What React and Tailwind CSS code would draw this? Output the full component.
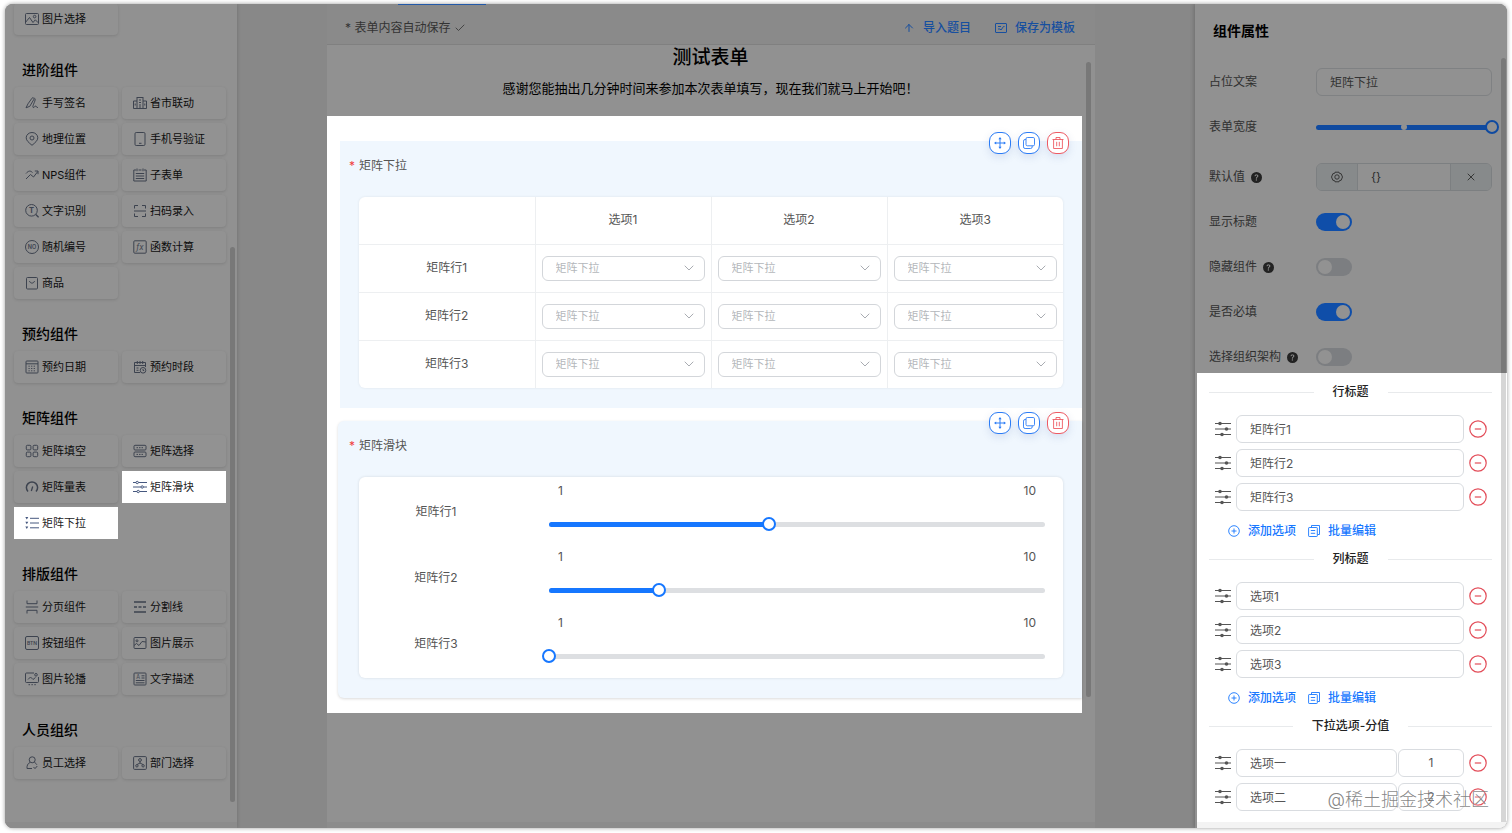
import React, { useState } from "react";
import { ArrowUp, Check, ChevronDown, X } from "lucide-react";
import { BsQuestionCircleFill } from "react-icons/bs";

// ---- Icons of the component palette, all on a 14x14 grid ----
const GLYPHS = {
  image: (
    <>
      <rect x="0.5" y="1.5" width="13" height="11" rx="1" />
      <circle cx="9.6" cy="4.6" r="1.3" />
      <path d="M0.8 10 4.5 5.5 8 10.5 10.3 7.8 13.3 10.8" />
    </>
  ),
  sign: <path d="M1 11.8 3 7.800 7 2.200c.8-1.100 2.600-.1 1.900 1.100L4.800 10.300 1 11.800M9.500 2.200c2.600.6-3 8.300-1.300 9.300 1.100.6 1.600-1.700 2.700-1.500.8.2.2 1.800 2 1.500" />,
  city: (
    <>
      <rect x="4" y="1.5" width="6" height="11" />
      <path d="M4 5H0.5v7.500h13V5H10M6 4h2M6 6.500h2M6 9h2M7 10v2.500M2.200 7.500v2M11.800 7.500v2" />
    </>
  ),
  pin: (
    <>
      <path d="M7 13.300C4 10.800 1.200 8.600 1.200 5.800a5.800 5.300 0 0 1 11.600 0C12.800 8.600 10 10.800 7 13.300z" />
      <circle cx="7" cy="6" r="2" />
    </>
  ),
  phone: (
    <>
      <rect x="2" y="0.5" width="10" height="13" rx="1.2" />
      <path d="M6 11.300h2.500" />
    </>
  ),
  trend: <path d="M1 5.500C3.500 2.500 5.500 2.500 7.500 4.500M1 11 5.500 6.500 8.500 9 12.800 3.500M9.800 3h3.200v3.200" />,
  subform: (
    <>
      <path d="M3 2H0.8v11h12.400V2H11M5.500 2h3M4 0.500v2.700M10 0.500v2.700" />
      <path d="M2.800 5.500h8.400M2.800 8h8.400M2.800 10.500h8.400" />
    </>
  ),
  ocr: (
    <>
      <circle cx="6.5" cy="6.3" r="5.8" />
      <path d="M10.800 10.500 13.600 13.300" strokeWidth="1.4" />
      <text x="6.5" y="9" fontSize="7.5" textAnchor="middle" fontWeight="700" fill="currentColor" stroke="none">T</text>
    </>
  ),
  scan: <path d="M1.500 4.500v-3h3.500M9 1.500h3.500v3M1.500 9.500v3h3.500M9 12.500h3.500v-3M1 7h12" />,
  number: (
    <>
      <circle cx="7" cy="7" r="6.5" />
      <text x="7" y="9" fontSize="5.5" textAnchor="middle" fontWeight="600" fill="currentColor" stroke="none">NO</text>
    </>
  ),
  formula: (
    <>
      <rect x="0.8" y="0.8" width="12.4" height="12.4" rx="1" />
      <text x="7" y="9.8" fontSize="8" textAnchor="middle" fontStyle="italic" fill="currentColor" stroke="none">fx</text>
    </>
  ),
  goods: (
    <>
      <rect x="1.5" y="1.5" width="11" height="11.5" rx="1" />
      <path d="M4.500 5c.5 2.800 4.500 2.800 5 0" />
    </>
  ),
  calendar: (
    <>
      <rect x="1" y="1" width="12" height="12" rx="0.8" />
      <path d="M1 3.800h12" />
      <path d="M3.500 6.200h7.500M3.500 8.500h7.500M3.500 10.800h7.500" strokeDasharray="1.2 1.4" />
    </>
  ),
  period: (
    <>
      <path d="M7 12.500H1.500v-10h11V7M1.500 5.500h11M4.300 1v3M7 1v3M9.700 1v3M3.500 8h2M3.500 10.300h2" />
      <circle cx="10" cy="10.3" r="2.8" />
      <path d="M10 9v1.500h1.200" />
    </>
  ),
  fill: (
    <>
      <rect x="1.3" y="1.3" width="4.6" height="4.6" rx="1" />
      <rect x="8.1" y="1.3" width="4.6" height="4.6" rx="1" />
      <rect x="1.3" y="8.1" width="4.6" height="4.6" rx="1" />
      <rect x="8.1" y="8.1" width="4.6" height="4.6" rx="1" />
    </>
  ),
  choose: (
    <>
      <rect x="1" y="1.3" width="12" height="4.7" rx="1" />
      <rect x="1" y="8" width="12" height="4.7" rx="1" />
      <path d="M3.500 3.700h7M3.500 10.400h7" strokeDasharray="1.5 1" />
    </>
  ),
  gauge: (
    <>
      <path d="M3 11.500A5.600 5.600 0 1 1 11 11.500" strokeWidth="1.5" />
      <path d="M6.300 11 7.700 6.500" strokeWidth="1.3" />
    </>
  ),
  sliders: (
    <>
      <path d="M0 2.500h3M5.400 2.500H14M0 7h8M10.400 7H14M0 11.500h4M6.400 11.500H14" />
      <circle cx="4.2" cy="2.5" r="1.2" />
      <circle cx="9.2" cy="7" r="1.2" />
      <circle cx="5.2" cy="11.5" r="1.2" />
    </>
  ),
  dropdown: (
    <>
      <path d="M5 2.300h9M5 7h9M5 11.800h9" />
      <path d="M0.300 1h3L1.800 3.500zM0.300 5.800h3L1.800 8.300zM0.300 10.500h3L1.800 13z" fill="currentColor" stroke="none" />
    </>
  ),
  page: <path d="M2 0.500v3.200h10V0.500M2 13.500v-3.200h10v3.200M0.800 7h12.400" />,
  divider: (
    <>
      <path d="M1 2h12M1 12h12" strokeWidth="1.3" />
      <path d="M1 7h12" strokeWidth="1.3" strokeDasharray="3 1.5" />
    </>
  ),
  button: (
    <>
      <rect x="0.5" y="0.5" width="13" height="13" rx="1.5" />
      <text x="7" y="8.8" fontSize="5" textAnchor="middle" fontWeight="600" fill="currentColor" stroke="none">BTN</text>
    </>
  ),
  picture: (
    <>
      <rect x="1" y="1.5" width="12" height="11" rx="1" />
      <circle cx="4" cy="4.8" r="1" />
      <path d="M1 9.500 3.500 7.500 6 9.500 9 5.500 13 6" />
    </>
  ),
  carousel: (
    <>
      <path d="M9 1H1.500a1 1 0 0 0-1 1v7.500a1 1 0 0 0 1 1h11a1 1 0 0 0 1-1V5" />
      <circle cx="11" cy="2.8" r="1.3" />
      <path d="M3 7.500 5.500 5 8 7.500 10.500 5.500" />
      <path d="M3.500 12.700h7.500" strokeDasharray="1.5 1.4" />
    </>
  ),
  text: (
    <>
      <rect x="1" y="1" width="12" height="12" rx="0.8" />
      <path d="M8.500 3.800h3M8.500 6h3M2.800 8.500h8.700M2.800 10.800h8.700" />
      <text x="5.2" y="7.3" fontSize="5.5" textAnchor="middle" fill="currentColor" stroke="none">A</text>
    </>
  ),
  staff: (
    <>
      <circle cx="7.2" cy="3.8" r="3" />
      <path d="M5 6.500C2.500 7.500 1.800 10 2 12.500h5M9.500 6.500c1.300.6 2 1.400 2.300 2.300M8.500 11l1.500 1.600 2.300-2.600" />
    </>
  ),
  org: (
    <>
      <rect x="0.6" y="0.6" width="12.8" height="12.8" rx="1" />
      <circle cx="7" cy="4" r="1.4" />
      <circle cx="3.9" cy="9.8" r="1.2" />
      <circle cx="10.1" cy="9.8" r="1.2" />
      <path d="M7 5.400v1.800M3.900 8.600 7 7l3.100 1.600" />
    </>
  ),
};

function Glyph({ name }) {
  return (
    <svg
      viewBox="0 0 14 14"
      className="size-3.5 shrink-0"
      fill="none"
      stroke="currentColor"
      strokeWidth="1"
      aria-hidden="true"
    >
      {GLYPHS[name]}
    </svg>
  );
}

const PALETTE = [
  { title: null, items: [["image", "图片选择"]] },
  {
    title: "进阶组件",
    items: [
      ["sign", "手写签名"],
      ["city", "省市联动"],
      ["pin", "地理位置"],
      ["phone", "手机号验证"],
      ["trend", "NPS组件"],
      ["subform", "子表单"],
      ["ocr", "文字识别"],
      ["scan", "扫码录入"],
      ["number", "随机编号"],
      ["formula", "函数计算"],
      ["goods", "商品"],
    ],
  },
  { title: "预约组件", items: [["calendar", "预约日期"], ["period", "预约时段"]] },
  {
    title: "矩阵组件",
    items: [
      ["fill", "矩阵填空"],
      ["choose", "矩阵选择"],
      ["gauge", "矩阵量表"],
      ["sliders", "矩阵滑块", true],
      ["dropdown", "矩阵下拉", true],
    ],
  },
  {
    title: "排版组件",
    items: [
      ["page", "分页组件"],
      ["divider", "分割线"],
      ["button", "按钮组件"],
      ["picture", "图片展示"],
      ["carousel", "图片轮播"],
      ["text", "文字描述"],
    ],
  },
  { title: "人员组织", items: [["staff", "员工选择"], ["org", "部门选择"]] },
];

function Palette() {
  return (
    <aside className="flex w-[232px] shrink-0 overflow-hidden border-b-[6px] border-[#8c8c8c] bg-[#919191] pl-[9px] pr-0.5 shadow-[1px_0_3px_rgba(0,0,0,0.12)]">
      {/* list is scrolled a little, so the first card is cut off */}
      <div className="-mt-px w-[212px]">
        {PALETTE.map(function (group, i) {
          return (
            <section key={i}>
              {group.title && (
                <h2 className="pb-[5px] pl-2 pt-[23px] text-sm/6 font-medium text-black">{group.title}</h2>
              )}
              <div className="grid grid-cols-2 gap-1">
                {group.items.map(function ([icon, name, lit]) {
                  return (
                    <button
                      key={name}
                      type="button"
                      className={
                        "flex h-8 items-center gap-[3px] pl-[11px] text-[11px] " +
                        (lit
                          ? "bg-white text-[#222]"
                          : "rounded-sm bg-[#929292] text-[#0c0c0c] shadow-[0_1px_3px_rgba(0,0,0,0.12)]")
                      }
                    >
                      <span className={lit ? "text-[#46587f]" : "text-[#3d434f]"}>
                        <Glyph name={icon} />
                      </span>
                      {name}
                    </button>
                  );
                })}
              </div>
            </section>
          );
        })}
      </div>
      <div className="mb-[20px] ml-1 mt-[243px] w-[5px] rounded-full bg-[#787878]" />
    </aside>
  );
}

// Range input on top of its own track; the thumb may hang over both track ends
function Slider({ label, min, max, start, dim }) {
  const [value, setValue] = useState(start);
  const pct = ((value - min) / (max - min)) * 100;
  return (
    <div className="grid flex-1 items-center">
      <div
        className={
          "col-start-1 row-start-1 flex h-[5px] overflow-hidden rounded-full " +
          (dim ? "bg-[#7f8183]" : "bg-[#dddfe2]")
        }
      >
        <div className={dim ? "bg-[#0f4aa0]" : "bg-[#1677ff]"} style={{ width: pct + "%" }} />
      </div>
      {dim && <span className="col-start-1 row-start-1 size-1.5 justify-self-center rounded-full bg-[#919191]" />}
      <input
        type="range"
        aria-label={label}
        min={min}
        max={max}
        value={value}
        onChange={function (e) { setValue(Number(e.target.value)); }}
        className={
          "col-start-1 row-start-1 -mx-[7px] h-3.5 w-[calc(100%+14px)] appearance-none bg-transparent [&::-webkit-slider-thumb]:size-3.5 [&::-webkit-slider-thumb]:appearance-none [&::-webkit-slider-thumb]:rounded-full [&::-webkit-slider-thumb]:border-2 " +
          (dim
            ? "[&::-webkit-slider-thumb]:border-[#0f4aa0] [&::-webkit-slider-thumb]:bg-[#919191]"
            : "[&::-webkit-slider-thumb]:border-[#1677ff] [&::-webkit-slider-thumb]:bg-white")
        }
      />
    </div>
  );
}

function BlockActions() {
  const base = "flex size-[22px] items-center justify-center rounded-[9px] border bg-white shadow-[0_3px_8px_rgba(60,90,160,0.15)] ";
  return (
    <div className="absolute -top-[9px] right-[13px] flex gap-[7px]">
      <button type="button" aria-label="移动" className={base + "border-[#2b7cf6] text-[#2b7cf6]"}>
        <svg viewBox="0 0 12 12" className="size-3" fill="none" stroke="currentColor" strokeWidth="1">
          <path d="M6 1.500v9M1.500 6h9" />
          <path d="M6 0 7.600 2.200H4.400zM6 12 4.400 9.800h3.200zM0 6l2.200-1.600v3.200zM12 6 9.800 7.600V4.400z" fill="currentColor" stroke="none" />
        </svg>
      </button>
      <button type="button" aria-label="复制" className={base + "border-[#2b7cf6] text-[#2b7cf6]"}>
        <svg viewBox="0 0 12 12" className="size-3" fill="none" stroke="currentColor" strokeWidth="0.9">
          <rect x="3" y="0.5" width="8.5" height="8.3" rx="1.3" />
          <path d="M3 2.500h-.8A1.600 1.600 0 0 0 .5 4.100v5.800a1.600 1.600 0 0 0 1.600 1.600h5.500a1.600 1.600 0 0 0 1.600-1.600V8.800" />
        </svg>
      </button>
      <button type="button" aria-label="删除" className={base + "border-[#ee5a63] text-[#ee5a63]"}>
        <svg viewBox="0 0 12 12" className="size-3" fill="none" stroke="currentColor" strokeWidth="0.9">
          <path d="M0.500 2.500h11M4 2.500v-2h4v2M1.600 2.500v9h8.800v-9M4.700 4.800v4.500M7.300 4.800v4.500" />
        </svg>
      </button>
    </div>
  );
}

function Block({ title, className, children }) {
  return (
    <section className={"relative bg-[#f0f7fe] pb-5 pr-[19px] pt-[15px] " + className}>
      <h3 className="mb-[21px] flex gap-1 text-xs/5 text-[#555]">
        <span className="text-[#f03e3e]">*</span>
        {title}
      </h3>
      <BlockActions />
      {children}
    </section>
  );
}

const ROWS = ["矩阵行1", "矩阵行2", "矩阵行3"];
const COLS = ["选项1", "选项2", "选项3"];

function MatrixSelect() {
  return (
    <div className="ml-2.5 overflow-hidden rounded-md bg-white shadow-[0_0_3px_rgba(0,0,0,0.08)]">
      <table className="w-full table-fixed text-xs text-[#555]">
        <thead>
          <tr className="h-[47px]">
            <td />
            {COLS.map(function (c) {
              return <th key={c} scope="col" className="border-l border-[#edeff1] font-normal">{c}</th>;
            })}
          </tr>
        </thead>
        <tbody>
          {ROWS.map(function (r) {
            return (
              <tr key={r} className="h-12 border-t border-[#edeff1]">
                <th scope="row" className="font-normal">{r}</th>
                {COLS.map(function (c) {
                  return (
                    <td key={c} className="border-l border-[#edeff1] px-1.5">
                      <div className="grid items-center">
                        <select
                          aria-label={r + " " + c}
                          className="col-start-1 row-start-1 h-[25px] w-full appearance-none rounded-md border border-[#d3d6da] bg-white pl-[13px] text-[11px] text-[#b4b7bb]"
                        >
                          <option>矩阵下拉</option>
                        </select>
                        <ChevronDown className="pointer-events-none col-start-1 row-start-1 mr-2 size-4 justify-self-end text-[#a9acb2]" strokeWidth={1.5} />
                      </div>
                    </td>
                  );
                })}
              </tr>
            );
          })}
        </tbody>
      </table>
    </div>
  );
}

function MatrixSlider() {
  const starts = [5, 3, 1];
  return (
    <div className="ml-2.5 rounded-md bg-white pb-[3px] text-xs text-[#555] shadow-[0_0_3px_rgba(0,0,0,0.12)]">
      {ROWS.map(function (r, i) {
        return (
          <div key={r} className="flex h-[66px] items-start pr-[18px]">
            <span className="w-[154px] pt-[25px] text-center leading-5">{r}</span>
            <div className="flex flex-1 flex-col pl-9 pt-1">
              <div className="mb-4 flex justify-between px-[9px] leading-5">
                <span>1</span>
                <span>10</span>
              </div>
              <Slider label={r} min={1} max={10} start={starts[i]} />
            </div>
          </div>
        );
      })}
    </div>
  );
}

function Canvas() {
  return (
    <main className="flex min-w-0 flex-1 flex-col pl-[90px] pr-[100px]">
      <div className="flex flex-1 flex-col border-b-[6px] border-[#8c8c8c] bg-[#919191]">
        <div className="bg-[#8a8a8a]">
          <div className="ml-[71px] h-px w-[88px] bg-[#2359a8]" />
        </div>
        <div className="flex h-10 items-center justify-between border-b border-[#808080] bg-[#8a8a8a] pl-[18px] pr-5 pt-1.5 text-xs">
          <p className="flex items-center gap-1 text-[#333]">
            * 表单内容自动保存
            <Check className="size-3" strokeWidth={1.6} />
          </p>
          <div className="flex gap-6 text-[#174f9f]">
            <button type="button" className="flex items-center gap-2 font-medium">
              <ArrowUp className="size-3" strokeWidth={2} />
              导入题目
            </button>
            <button type="button" className="flex items-center gap-2 font-medium">
              <svg viewBox="0 0 12 12" className="size-3" fill="none" stroke="currentColor" strokeWidth="1">
                <rect x="0.5" y="1.5" width="11" height="9" rx="0.5" />
                <path d="M3 4.500h3M3 7h2l1 1 2.500-3.500h1" />
              </svg>
              保存为模板
            </button>
          </div>
        </div>

        <div className="flex">
          <div className="min-w-0 flex-1">
            <div className="pb-[18px] pl-3 text-center text-black">
              <h1 className="text-[19px]/[26px] font-medium">测试表单</h1>
              <p className="mt-[7px] text-[13px]/5">感谢您能抽出几分钟时间来参加本次表单填写，现在我们就马上开始吧！</p>
            </div>
            <div className="flex flex-col gap-[13px] bg-white pb-[15px] pt-[25px]">
              <Block title="矩阵下拉" className="ml-[13px] pl-[9px]">
                <MatrixSelect />
              </Block>
              <Block title="矩阵滑块" className="ml-[11px] rounded-l-md pl-[11px] shadow-[0_1px_3px_rgba(0,0,0,0.15)]">
                <MatrixSlider />
              </Block>
            </div>
          </div>
          <div className="mb-4 ml-1 mr-1 mt-[17px] w-[5px] rounded-full bg-[#787878]" />
        </div>
      </div>
    </main>
  );
}

function Field({ id, label, help, className = "", children }) {
  return (
    <div className={"flex h-7 items-center " + className}>
      <label htmlFor={id} className="flex w-[107px] shrink-0 items-center gap-1.5 text-[#303030]">
        {label}
        {help && <BsQuestionCircleFill className="size-[11px] text-[#222]" />}
      </label>
      {children}
    </div>
  );
}

function Switch({ id, on }) {
  return (
    <input
      id={id}
      type="checkbox"
      role="switch"
      defaultChecked={on}
      className="flex h-[18px] w-9 appearance-none items-center rounded-full bg-[#7c7e81] px-0.5 before:size-3.5 before:rounded-full before:bg-[#929292] before:content-[''] checked:justify-end checked:bg-[#0f4ea9]"
    />
  );
}

function DividerTitle({ children }) {
  return (
    <h3 className="flex items-center gap-[19px] text-xs/5 font-medium text-[#222] before:h-px before:flex-1 before:bg-[#e8eaec] before:content-[''] after:h-px after:flex-1 after:bg-[#e8eaec] after:content-['']">
      {children}
    </h3>
  );
}

function OptionRow({ name, score }) {
  const box = "h-7 rounded-md border border-[#d9dce0] bg-white pb-0.5 text-[#555] ";
  return (
    <li className="flex items-center gap-[5px] pl-1.5 pr-[5px]">
      <svg viewBox="0 0 16 16" className="size-4 shrink-0 text-[#555]" fill="none" stroke="currentColor" strokeWidth="1.1">
        <path d="M0 2.500h16M0 8h16M0 13.500h16" />
        <g fill="currentColor" stroke="none">
          <circle cx="5" cy="2.5" r="1.8" />
          <circle cx="11.5" cy="8" r="1.8" />
          <circle cx="7" cy="13.5" r="1.8" />
        </g>
      </svg>
      <div className="flex min-w-0 flex-1 gap-px">
        <input aria-label={name} defaultValue={name} className={box + "min-w-0 flex-1 pl-[13px]"} />
        {score && <input aria-label={name + " 分值"} defaultValue={score} className={box + "w-[66px] text-center"} />}
      </div>
      <button type="button" aria-label={"删除 " + name} className="text-[#e34d59]">
        <svg viewBox="0 0 18 18" className="size-[18px]" fill="none" stroke="currentColor" strokeWidth="1.2">
          <circle cx="9" cy="9" r="8.2" />
          <path d="M5.800 9h6.400" />
        </svg>
      </button>
    </li>
  );
}

function OptionGroup({ title, names, scores }) {
  return (
    <section>
      <DividerTitle>{title}</DividerTitle>
      <ul className="mt-[13px] flex flex-col gap-1.5">
        {names.map(function (n, i) {
          return <OptionRow key={n} name={n} score={scores && scores[i]} />;
        })}
      </ul>
      {!scores && (
        <div className="mb-2 mt-2.5 flex gap-3 pl-[19px] leading-5 text-[#1677ff]">
          <button type="button" className="flex items-center gap-2 font-medium">
            <svg viewBox="0 0 12 12" className="size-3" fill="none" stroke="currentColor" strokeWidth="0.9">
              <circle cx="6" cy="6" r="5.3" />
              <path d="M3.500 6h5M6 3.500v5" />
            </svg>
            添加选项
          </button>
          <button type="button" className="flex items-center gap-2 font-medium">
            <svg viewBox="0 0 12 12" className="size-3" fill="none" stroke="currentColor" strokeWidth="0.9">
              <path d="M3.500 2.500v-2h8v9h-2" />
              <rect x="0.6" y="2.5" width="8.7" height="9" rx="0.6" />
              <path d="M2.800 5.500h4.400M2.800 8.300h4.400" />
            </svg>
            批量编辑
          </button>
        </div>
      )}
    </section>
  );
}

function Properties() {
  return (
    <aside className="relative flex w-[312px] shrink-0 flex-col bg-[#919191] pl-0.5 text-xs shadow-[-1px_0_4px_rgba(0,0,0,0.2)]">
      <div className="pb-0.5 pl-3 pr-[15px] pt-[17px]">
        <h2 className="mb-[27px] pl-1 text-sm/5 font-semibold text-black">组件属性</h2>
        <div className="flex flex-col gap-[17px]">
          <Field id="placeholder" label="占位文案">
            <input
              id="placeholder"
              defaultValue="矩阵下拉"
              className="h-7 min-w-0 flex-1 rounded-md border border-[#7f8183] bg-transparent pb-0.5 pl-[13px] text-[#333]"
            />
          </Field>
          <Field label="表单宽度">
            <Slider label="表单宽度" min={0} max={100} start={100} dim />
          </Field>
          <Field id="initial" label="默认值" help className="mt-[5px]">
            <div className="flex h-7 min-w-0 flex-1 overflow-hidden rounded-md border border-[#7c7f81] text-[#2d2d2d]">
              <button type="button" aria-label="设置" className="flex w-10 items-center justify-center bg-[#878a8b]">
                <svg viewBox="0 0 12 12" className="size-3" fill="none" stroke="currentColor" strokeWidth="0.9">
                  <path d="M4 1.200h4l.6 1.300 1.500.2L11.500 6l-1.400 3.300-1.500.2L8 10.800H4l-.6-1.300-1.500-.2L.5 6l1.400-3.300 1.500-.2z" />
                  <circle cx="6" cy="6" r="2.2" />
                </svg>
              </button>
              <input
                id="initial"
                defaultValue="{}"
                className="min-w-0 flex-1 border-x border-[#7c7f81] bg-transparent pl-[13px]"
              />
              <button type="button" aria-label="清空" className="flex w-10 items-center justify-center bg-[#878a8b]">
                <X className="size-3" strokeWidth={1.8} />
              </button>
            </div>
          </Field>
          <Field id="showTitle" label="显示标题"><Switch id="showTitle" on /></Field>
          <Field id="hidden" label="隐藏组件" help><Switch id="hidden" /></Field>
          <Field id="required" label="是否必填"><Switch id="required" on /></Field>
          <Field id="org" label="选择组织架构" help><Switch id="org" /></Field>
        </div>
      </div>

      <div className="flex-1 border-b-[6px] border-[#f3f3f3] bg-white pl-3 pr-[15px] pt-[9px]">
        <OptionGroup title="行标题" names={ROWS} />
        <OptionGroup title="列标题" names={COLS} />
        <OptionGroup title="下拉选项-分值" names={["选项一", "选项二"]} scores={["1", "2"]} />
      </div>

      <div className="absolute bottom-1.5 right-px top-[54px] w-[5px] rounded-t-full bg-black/16" />
      <p className="pointer-events-none absolute bottom-3.5 right-[18px] text-lg/7 font-light text-[#666]/80 [text-shadow:0_0_2px_white]">
        @稀土掘金技术社区
      </p>
    </aside>
  );
}

export default function App() {
  return (
    <div className="flex min-h-screen bg-white px-[5px] pb-[5px] pt-1 font-['Inter','Noto_Sans_CJK_SC',sans-serif]">
      <div className="flex flex-1 overflow-hidden rounded-lg bg-[#888] shadow-[0_0_4px_rgba(0,0,0,0.4)]">
        <Palette />
        <Canvas />
        <Properties />
      </div>
    </div>
  );
}
